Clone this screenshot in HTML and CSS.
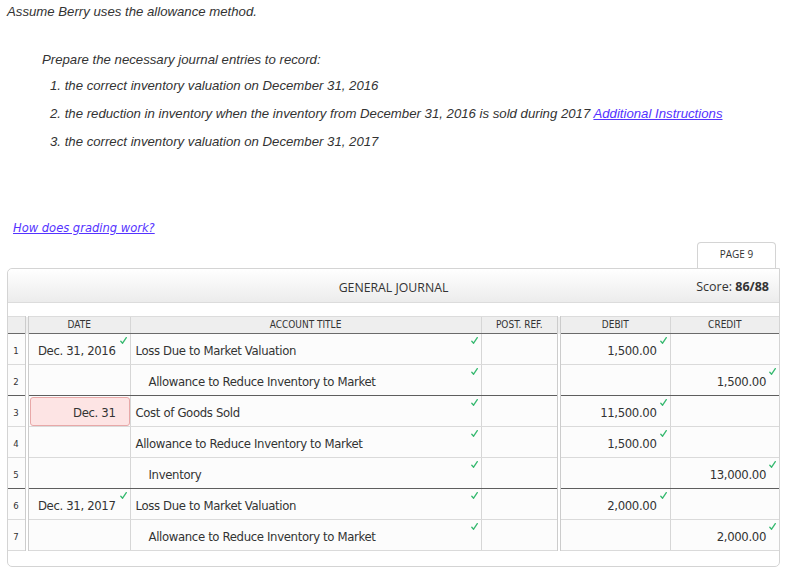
FILE: index.html
```html
<!DOCTYPE html>
<html>
<head>
<meta charset="utf-8">
<link rel="stylesheet" href="styles.css">
</head>
<body>
<p class="intro">Assume Berry uses the allowance method.</p>
<div class="instructions">
  <p class="lead">Prepare the necessary journal entries to record:</p>
  <ol class="steps">
    <li>1. the correct inventory valuation on December 31, 2016</li>
    <li>2. the reduction in inventory when the inventory from December 31, 2016 is sold during 2017 <a class="link" href="#">Additional Instructions</a></li>
    <li>3. the correct inventory valuation on December 31, 2017</li>
  </ol>
</div>
<a class="grading" href="#">How does grading work?</a>
<div class="tabs"><div class="tab">PAGE 9</div></div>
<div class="panel">
  <div class="panel-head">
    <span class="title">GENERAL JOURNAL</span>
    <span class="score">Score: <b>86/88</b></span>
  </div>
  <table class="journal">
    <colgroup>
      <col class="c-num"><col class="c-date"><col class="c-acct"><col class="c-ref"><col class="c-debit"><col class="c-amt">
    </colgroup>
    <thead>
      <tr><th class="num"></th><th>DATE</th><th>ACCOUNT TITLE</th><th class="ref">POST. REF.</th><th>DEBIT</th><th>CREDIT</th></tr>
    </thead>
    <tbody>
      <tr>
        <td class="num">1</td>
        <td class="date">Dec. 31, 2016<svg class="ok" viewBox="0 0 7 7"><path d="M0.8 4.2 L2.6 6.2 L6.3 0.6"/></svg></td>
        <td class="acct">Loss Due to Market Valuation<svg class="ok" viewBox="0 0 7 7"><path d="M0.8 4.2 L2.6 6.2 L6.3 0.6"/></svg></td>
        <td class="ref"></td>
        <td class="amt">1,500.00<svg class="ok" viewBox="0 0 7 7"><path d="M0.8 4.2 L2.6 6.2 L6.3 0.6"/></svg></td>
        <td class="amt"></td>
      </tr>
      <tr class="end">
        <td class="num">2</td>
        <td class="date"></td>
        <td class="acct credit">Allowance to Reduce Inventory to Market<svg class="ok" viewBox="0 0 7 7"><path d="M0.8 4.2 L2.6 6.2 L6.3 0.6"/></svg></td>
        <td class="ref"></td>
        <td class="amt"></td>
        <td class="amt">1,500.00<svg class="ok" viewBox="0 0 7 7"><path d="M0.8 4.2 L2.6 6.2 L6.3 0.6"/></svg></td>
      </tr>
      <tr>
        <td class="num">3</td>
        <td class="date err-cell"><div class="err">Dec. 31</div></td>
        <td class="acct">Cost of Goods Sold<svg class="ok" viewBox="0 0 7 7"><path d="M0.8 4.2 L2.6 6.2 L6.3 0.6"/></svg></td>
        <td class="ref"></td>
        <td class="amt">11,500.00<svg class="ok" viewBox="0 0 7 7"><path d="M0.8 4.2 L2.6 6.2 L6.3 0.6"/></svg></td>
        <td class="amt"></td>
      </tr>
      <tr>
        <td class="num">4</td>
        <td class="date"></td>
        <td class="acct">Allowance to Reduce Inventory to Market<svg class="ok" viewBox="0 0 7 7"><path d="M0.8 4.2 L2.6 6.2 L6.3 0.6"/></svg></td>
        <td class="ref"></td>
        <td class="amt">1,500.00<svg class="ok" viewBox="0 0 7 7"><path d="M0.8 4.2 L2.6 6.2 L6.3 0.6"/></svg></td>
        <td class="amt"></td>
      </tr>
      <tr class="end">
        <td class="num">5</td>
        <td class="date"></td>
        <td class="acct credit">Inventory<svg class="ok" viewBox="0 0 7 7"><path d="M0.8 4.2 L2.6 6.2 L6.3 0.6"/></svg></td>
        <td class="ref"></td>
        <td class="amt"></td>
        <td class="amt">13,000.00<svg class="ok" viewBox="0 0 7 7"><path d="M0.8 4.2 L2.6 6.2 L6.3 0.6"/></svg></td>
      </tr>
      <tr>
        <td class="num">6</td>
        <td class="date">Dec. 31, 2017<svg class="ok" viewBox="0 0 7 7"><path d="M0.8 4.2 L2.6 6.2 L6.3 0.6"/></svg></td>
        <td class="acct">Loss Due to Market Valuation<svg class="ok" viewBox="0 0 7 7"><path d="M0.8 4.2 L2.6 6.2 L6.3 0.6"/></svg></td>
        <td class="ref"></td>
        <td class="amt">2,000.00<svg class="ok" viewBox="0 0 7 7"><path d="M0.8 4.2 L2.6 6.2 L6.3 0.6"/></svg></td>
        <td class="amt"></td>
      </tr>
      <tr>
        <td class="num">7</td>
        <td class="date"></td>
        <td class="acct credit">Allowance to Reduce Inventory to Market<svg class="ok" viewBox="0 0 7 7"><path d="M0.8 4.2 L2.6 6.2 L6.3 0.6"/></svg></td>
        <td class="ref"></td>
        <td class="amt"></td>
        <td class="amt">2,000.00<svg class="ok" viewBox="0 0 7 7"><path d="M0.8 4.2 L2.6 6.2 L6.3 0.6"/></svg></td>
      </tr>
    </tbody>
  </table>
</div>
</body>
</html>
```

FILE: styles.css
```css
html, body {
  margin: 0;
  padding: 0;
  background: #fff;
}
body {
  font-family: "Liberation Sans", Arial, sans-serif;
  color: #333;
  width: 789px;
}
.intro {
  margin: 4px 0 0 7px;
  font-size: 13.2px;
  line-height: 16px;
  font-style: italic;
}
.instructions {
  margin: 32px 0 0 42px;
  font-size: 13.2px;
  font-style: italic;
}
.lead {
  margin: 0;
  line-height: 16px;
}
.steps {
  list-style: none;
  margin: 4px 0 0 0;
  padding: 0 0 0 8px;
}
.steps li {
  line-height: 28px;
}
.link {
  color: #5533ff;
  text-decoration: underline;
}
.grading {
  display: inline-block;
  margin: 64px 0 0 13px;
  font-family: "DejaVu Sans Condensed", "DejaVu Sans", sans-serif;
  font-style: italic;
  font-size: 12.8px;
  line-height: 16px;
  color: #5533ff;
  text-decoration: underline;
}
.tabs {
  display: flex;
  justify-content: flex-end;
  margin: 6px 13px 0 7px;
}
.tab {
  width: 77px;
  height: 25px;
  border: 1px solid #d4d4d4;
  border-bottom: none;
  border-radius: 4px 4px 0 0;
  font-family: "Open Sans", sans-serif;
  font-size: 10px;
  line-height: 22px;
  text-align: center;
  color: #333;
  background: #fff;
}
.panel {
  margin: 0 9px 0 7px;
  border: 1px solid #d4d4d4;
  border-radius: 5px 0 5px 5px;
  padding-bottom: 15px;
  background: #fff;
}
.panel-head {
  position: relative;
  height: 33px;
  border-bottom: 1px solid #dcdcdc;
  border-radius: 5px 0 0 0;
  background: linear-gradient(#ffffff, #ececec);
  display: flex;
  align-items: center;
  justify-content: center;
  font-family: "Open Sans", sans-serif;
  color: #333;
}
.title {
  font-size: 12.3px;
  padding-top: 3px;
}
.score {
  position: absolute;
  right: 10px;
  top: 9px;
  font-size: 12.5px;
}
.score b {
  font-weight: 700;
}
.journal {
  margin-top: 13px;
  width: 771px;
  border-collapse: collapse;
  table-layout: fixed;
  font-family: "DejaVu Sans Condensed", "DejaVu Sans", sans-serif;
  color: #333;
}
.c-num { width: 19px; }
.c-date { width: 103px; }
.c-acct { width: 351px; }
.c-ref { width: 78px; }
.c-debit { width: 111px; }
.c-amt { width: 109px; }
.journal th {
  height: 16px;
  padding: 0;
  background: #eeeeee;
  border-top: 1px solid #dcdcdc;
  border-left: 1px solid #d6d6d6;
  border-bottom: 1px solid #6a6a6a;
  font-size: 10px;
  font-weight: normal;
  text-align: center;
  line-height: 16px;
}
.journal td {
  position: relative;
  height: 31px;
  padding: 3px 0 0 0;
  box-sizing: border-box;
  background: #fcfcfc;
  border-left: 1px solid #d6d6d6;
  border-bottom: 1px solid #dadada;
  font-size: 13px;
  letter-spacing: -0.35px;
  line-height: 26px;
  white-space: nowrap;
}
.journal th:first-child, .journal td:first-child {
  border-left: none;
}
.journal th:last-child, .journal td:last-child {
  border-right: none;
}
.journal .num {
  border-right: 4px double #cccccc;
  font-size: 9.5px;
  letter-spacing: 0;
  text-align: center;
  padding-right: 1px;
}
.journal .ref {
  border-right: 4px double #cccccc;
}
.journal tr.end td {
  border-bottom: 1px solid #5e5e5e;
}
.journal .date {
  text-align: right;
  padding-right: 14px;
}
.journal .acct {
  padding-left: 5px;
}
.journal .acct.credit {
  padding-left: 18px;
}
.journal .amt {
  text-align: right;
  padding-right: 13px;
}
.journal .err-cell {
  padding: 1px 0 0 1px;
}
.err {
  height: 29px;
  box-sizing: border-box;
  border: 1px solid #e8a8a8;
  border-radius: 3px;
  background: #fde4e4;
  padding-right: 13px;
  padding-top: 2px;
  line-height: 25px;
  text-align: right;
}
.ok {
  position: absolute;
  top: 3px;
  right: 3px;
  width: 7px;
  height: 7px;
  fill: none;
  stroke: #35b96f;
  stroke-width: 1.3;
  stroke-linecap: round;
  stroke-linejoin: round;
}
```
